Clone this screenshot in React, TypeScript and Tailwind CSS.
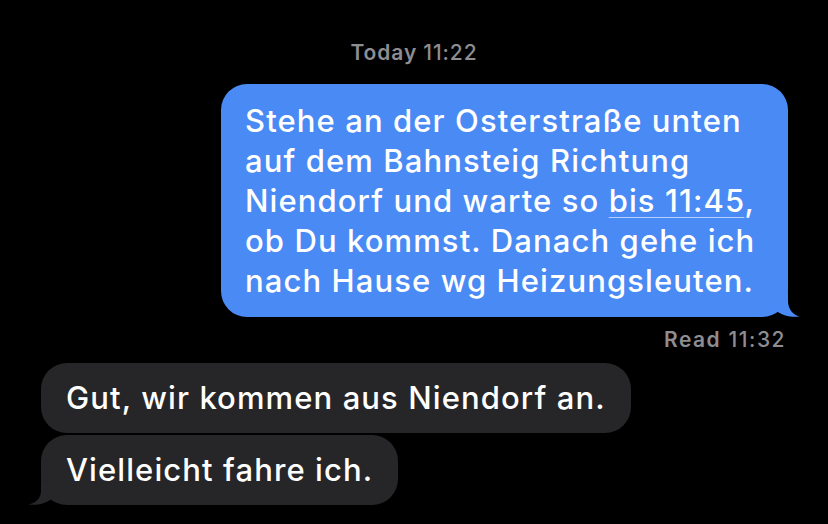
export default function App() {
  return (
    <div className="w-[828px] h-[524px] bg-black overflow-hidden flex flex-col font-[Inter,'Noto_Sans',sans-serif] text-white">
      {/* timestamp */}
      <div className="pt-[40px] text-center text-[21px] leading-[26px] font-semibold tracking-[0.9px] text-[#8d8d92]">
        Today <span className="font-medium">11:22</span>
      </div>

      {/* outgoing */}
      <div className="relative self-end mr-[40px] mt-[18px] w-[567px] rounded-[26px] bg-[#4a8af5] pl-[24px] pt-[17px] pb-[16px] text-[31px] leading-[40px] font-medium tracking-[1.1px] whitespace-nowrap">
        Stehe an der Osterstraße unten
        <br />
        auf dem Bahnsteig Richtung
        <br />
        Niendorf und warte so{" "}
        <span className="underline decoration-1 decoration-white/60 underline-offset-[5px]">bis 11:45</span>,
        <br />
        ob Du kommst. Danach gehe ich
        <br />
        nach Hause wg Heizungsleuten.
        <svg className="absolute right-[-12px] bottom-0" width="40" height="26" viewBox="0 0 40 26">
          <path d="M28 2 L28 10 C28 18 33 24 39.5 25.5 C32 26.5 22 25 15 19 L10 6 Z" fill="#4a8af5" />
        </svg>
      </div>

      <div className="self-end mr-[42px] mt-[10px] text-[21px] leading-[26px] tracking-[1.5px] text-[#8d8d92]">
        <span className="font-semibold">Read</span> <span className="font-medium">11:32</span>
      </div>

      {/* incoming */}
      <div className="mt-[10px] ml-[41px] flex flex-col items-start gap-[2px] text-[31px] leading-[40px] font-medium tracking-[1.1px]">
        <div className="rounded-[26px] bg-[#262629] px-[25px] py-[15px] whitespace-nowrap">
          Gut, wir kommen aus Niendorf an.
        </div>
        <div className="relative rounded-[26px] bg-[#262629] px-[25px] py-[15px] whitespace-nowrap">
          Vielleicht fahre ich.
          <svg className="absolute left-[-13px] bottom-0" width="40" height="26" viewBox="0 0 40 26">
            <path d="M13 2 L13 12 C13 19 8 24 0.5 25.5 C8 26.5 18 25 25 19 L30 6 Z" fill="#262629" />
          </svg>
        </div>
      </div>
    </div>
  );
}
